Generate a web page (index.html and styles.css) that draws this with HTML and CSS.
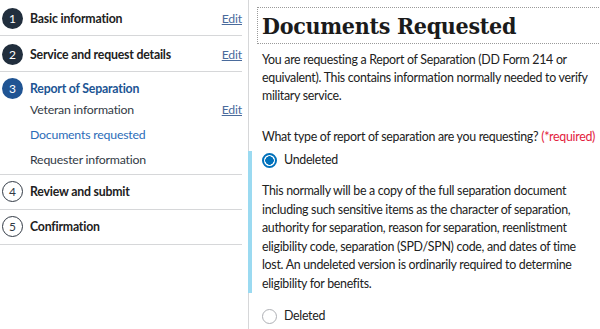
FILE: index.html
```html
<!DOCTYPE html>
<html lang="en">
<head>
    <meta charset="UTF-8">
    <title>Documents Requested</title>
    <link rel="stylesheet" href="styles.css">
</head>
<body>
<div class="page">
    <aside class="steps">
        <div class="step done">
            <span class="num">1</span>
            <span class="label">Basic information</span>
            <a href="#" class="edit">Edit</a>
        </div>
        <div class="step done">
            <span class="num">2</span>
            <span class="label">Service and request details</span>
            <a href="#" class="edit">Edit</a>
        </div>
        <div class="step current">
            <div class="step-head">
                <span class="num">3</span>
                <span class="label">Report of Separation</span>
            </div>
            <ul class="substeps">
                <li><span>Veteran information</span><a href="#" class="edit">Edit</a></li>
                <li class="active"><span>Documents requested</span></li>
                <li><span>Requester information</span></li>
            </ul>
        </div>
        <div class="step todo">
            <span class="num">4</span>
            <span class="label">Review and submit</span>
        </div>
        <div class="step todo">
            <span class="num">5</span>
            <span class="label">Confirmation</span>
        </div>
    </aside>

    <main class="content">
        <h1 class="title">Documents Requested</h1>
        <p class="intro">You are requesting a Report of Separation (DD Form 214 or equivalent). This contains information normally needed to verify military service.</p>

        <fieldset class="question">
            <legend>What type of report of separation are you requesting? <span class="req">(*required)</span></legend>
            <div class="option expanded">
                <label class="radio"><span class="dot checked"></span>Undeleted</label>
                <p class="hint">This normally will be a copy of the full separation document including such sensitive items as the character of separation, authority for separation, reason for separation, reenlistment eligibility code, separation (SPD/SPN) code, and dates of time lost. An undeleted version is ordinarily required to determine eligibility for benefits.</p>
            </div>
            <div class="option">
                <label class="radio"><span class="dot"></span>Deleted</label>
            </div>
        </fieldset>
    </main>
</div>
</body>
</html>
```

FILE: styles.css
```css
* { margin: 0; padding: 0; box-sizing: border-box; }
body {
    font-family: Lato, "Open Sans", sans-serif;
    font-size: 12.4px;
    letter-spacing: -0.3px;
    color: #212121;
    background: #fff;
    overflow: hidden;
}
a { color: #4a6b9c; }
.page { display: flex; height: 329px; }

/* sidebar steps */
.steps { width: 242px; flex-shrink: 0; font-size: 12.3px; letter-spacing: -0.2px; }
.step {
    display: flex;
    align-items: center;
    padding: 8px 0 6px;
    border-bottom: 1px solid #d6d7d9;
}
.step.current { display: block; padding: 6px 0 2px; }
.step.todo { padding: 6px 0 7px; }
.step-head { display: flex; align-items: center; }
.num {
    width: 21px; height: 21px; margin: 0 7px 0 2px;
    border-radius: 50%;
    display: flex; align-items: center; justify-content: center;
    font-size: 12px; letter-spacing: 0; flex-shrink: 0;
}
.done .num { background: #212e3d; color: #fff; }
.current .num { background: #205493; color: #fff; }
.todo .num { border: 1.5px solid #323a45; color: #323a45; }
.label { font-weight: 700; flex: 1; }
.current .label { color: #205493; }
.substeps { list-style: none; margin-top: -2px; }
.substeps li {
    display: flex; justify-content: space-between; align-items: center;
    height: 25px; padding-left: 30px; color: #323a45;
}
.substeps li.active { color: #2b6cb8; }

/* main form */
.content {
    flex: 1;
    margin-left: 6px;
    border-left: 1px solid #d6d7d9;
    padding: 8px 0 0 13px;
    line-height: 18px;
}
.title {
    font-family: "DejaVu Serif", serif;
    font-stretch: condensed;
    font-size: 23px;
    letter-spacing: -0.3px;
    line-height: 35px;
    font-weight: 700;
    color: #1b1b1b;
    margin: 0 -20px 0 -4px;
    padding-left: 4px;
    outline: 1px dotted #9a9a9a;
}
.intro { margin: 8px 0 23px; padding-right: 4px; }
.question { border: none; }
.question legend { margin-bottom: 5px; }
.req { color: #e31c3d; }
.option.expanded {
    margin: 0 0 0 -14px;
    padding: 1px 16px 0 10px;
    border-left: 4px solid #9bdaf1;
}
.radio { display: flex; align-items: center; height: 16px; }
.dot {
    width: 15px; height: 15px; border-radius: 50%;
    border: 1px solid #aeb0b5; margin: 0 7px 0 0;
}
.dot.checked {
    border: 2px solid #0071bb;
    background: radial-gradient(circle, #0071bb 0 4px, #fff 4.5px);
}
.hint { margin-top: 14px; line-height: 18.5px; }
.option { margin-top: 15px; }
```
